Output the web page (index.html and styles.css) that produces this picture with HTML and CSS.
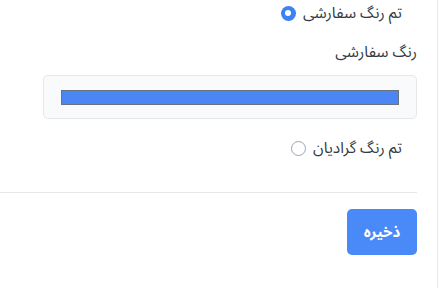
FILE: index.html
```html
<!DOCTYPE html>
<html lang="fa" dir="rtl">
<head>
<meta charset="utf-8">
<link rel="stylesheet" href="styles.css">
</head>
<body>
<div class="panel">
  <div class="options">
    <label class="radio-row">
      <span class="radio checked"></span>
      <span class="radio-text">تم رنگ سفارشی</span>
    </label>
  </div>
  <div class="field">
    <div class="field-label">رنگ سفارشی</div>
    <div class="color-box"><div class="swatch"></div></div>
  </div>
  <div class="options second">
    <label class="radio-row">
      <span class="radio"></span>
      <span class="radio-text">تم رنگ گرادیان</span>
    </label>
  </div>
  <div class="divider"></div>
  <div class="actions">
    <button class="save">ذخیره</button>
  </div>
</div>
</body>
</html>
```
FILE: styles.css
```css
html, body {
  margin: 0;
  padding: 0;
  background: #ffffff;
}
body {
  width: 440px;
  height: 288px;
  overflow: hidden;
  font-family: "Noto Sans Arabic", "Vazirmatn", "DejaVu Sans", sans-serif;
  color: #333a45;
  direction: rtl;
}
.panel {
  width: 418px;
  height: 288px;
  border-right: 1px solid #e5e7eb;
  padding-right: 20px;
  margin-right: 2px;
  box-sizing: content-box;
}
.options {
  padding-right: 15px;
  padding-top: 1px;
}
.radio-row {
  display: flex;
  flex-direction: row-reverse;
  justify-content: flex-end;
  align-items: center;
  gap: 7px;
  height: 24px;
}
.radio {
  width: 15px;
  height: 15px;
  border-radius: 50%;
  border: 1px solid #9ca3af;
  background: #fff;
  box-sizing: border-box;
  position: relative;
  flex: none;
}
.radio.checked {
  width: 15px;
  height: 15px;
  border: none;
  background: #3b82f6;
}
.radio.checked::after {
  content: "";
  position: absolute;
  width: 6px;
  height: 6px;
  border-radius: 50%;
  background: #fff;
  left: 4.5px;
  top: 4.5px;
}
.radio-text {
  font-size: 15.5px;
  line-height: 24px;
}
.field {
  margin-top: 15px;
}
.field-label {
  font-size: 15.5px;
  line-height: 24px;
  height: 24px;
}
.color-box {
  margin-top: 11px;
  margin-left: 44px;
  height: 44px;
  box-sizing: border-box;
  border: 1px solid #e5e7eb;
  border-radius: 5px;
  background: #f8fafc;
  padding: 14px 17px 0 17px;
}
.swatch {
  height: 15px;
  background: #4a86f4;
  border: 1px solid #6b7280;
  box-sizing: border-box;
}
.second {
  margin-top: 16px;
}
.divider {
  margin-top: 32px;
  border-top: 1px solid #e5e7eb;
}
.actions {
  margin-top: 16px;
  display: flex;
}
.save {
  width: 70px;
  height: 46px;
  border: none;
  border-radius: 5px;
  background: #4a8af8;
  color: #fff;
  font-family: inherit;
  font-size: 15px;
  font-weight: bold;
}
```
